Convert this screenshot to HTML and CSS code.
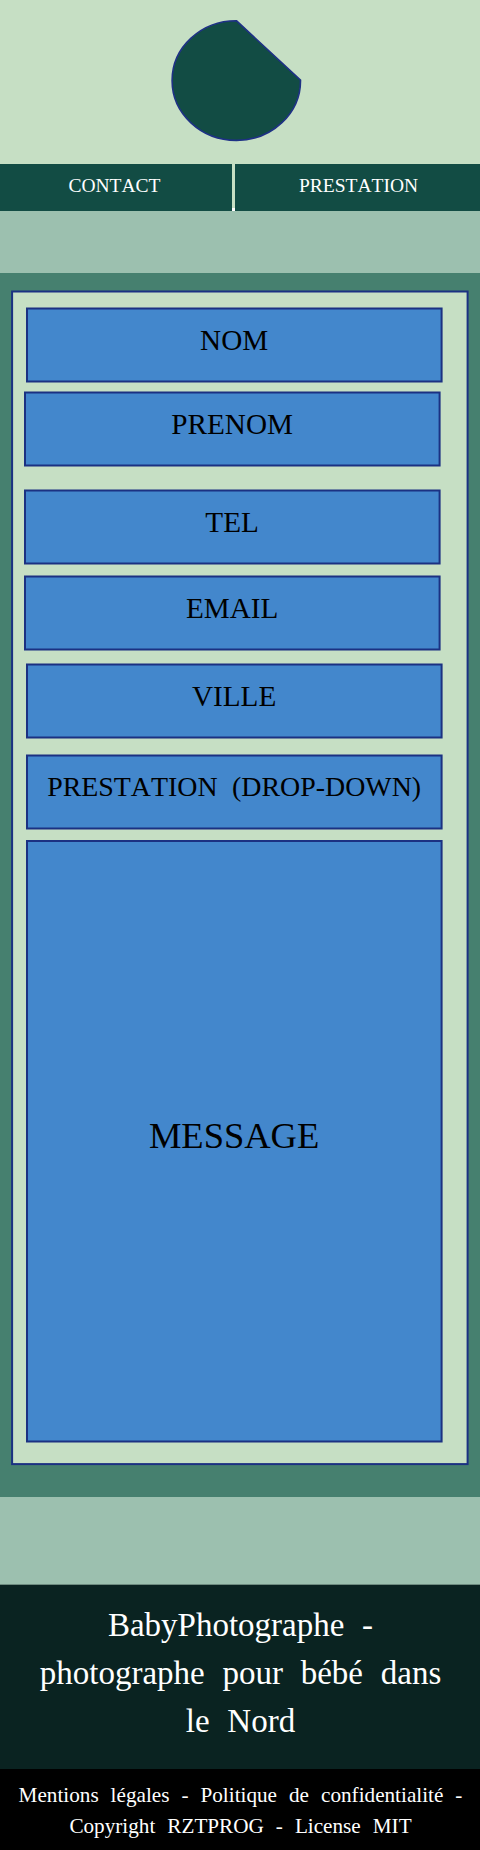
FILE: index.html
```html
<!DOCTYPE html>
<html lang="fr">
<head>
<meta charset="utf-8">
<title>BabyPhotographe - Contact</title>
<link rel="stylesheet" href="styles.css">
</head>
<body>
<header class="header">
  <svg class="logo" width="131" height="124" viewBox="0 0 131 124" role="img" aria-label="Logo">
    <path d="M129.5 61.2A64.2 59.8 0 1 1 65.6 1.8Z"/>
  </svg>
</header>
<nav class="nav">
  <a class="nav-link">CONTACT</a>
  <span class="nav-divider"></span>
  <a class="nav-link nav-link-wide">PRESTATION</a>
</nav>
<main class="main">
  <div class="card">
    <svg class="frame card-frame" width="459" height="1176"><rect x="1.1" y="1.5" width="455.5" height="1172.6"/></svg>
    <form class="form">
      <div class="field"><svg class="frame" width="417" height="76"><rect x="1" y="1.5" width="414.6" height="73"/></svg><span class="label">NOM</span></div>
      <div class="field shifted prenom"><svg class="frame" width="417" height="76"><rect x="1" y="1.5" width="414.6" height="73"/></svg><span class="label">PRENOM</span></div>
      <div class="field shifted tel"><svg class="frame" width="417" height="76"><rect x="1" y="1.5" width="414.6" height="73"/></svg><span class="label">TEL</span></div>
      <div class="field shifted email"><svg class="frame" width="417" height="76"><rect x="1" y="1.5" width="414.6" height="73"/></svg><span class="label">EMAIL</span></div>
      <div class="field ville"><svg class="frame" width="417" height="76"><rect x="1" y="1.5" width="414.6" height="73"/></svg><span class="label">VILLE</span></div>
      <div class="field prestation"><svg class="frame" width="417" height="76"><rect x="1" y="1.5" width="414.6" height="73"/></svg><span class="label">PRESTATION (DROP-DOWN)</span></div>
      <div class="field message"><svg class="frame" width="417" height="603"><rect x="1" y="1" width="414.6" height="600.5"/></svg><span class="label">MESSAGE</span></div>
    </form>
  </div>
</main>
<footer class="footer">
  <p class="tagline">BabyPhotographe -<br>photographe pour bébé dans<br>le Nord</p>
  <p class="legal">Mentions légales - Politique de confidentialité -<br>Copyright RZTPROG - License MIT</p>
</footer>
</body>
</html>
```
FILE: styles.css
```css
* { box-sizing: border-box; }
body {
  margin: 0;
  width: 480px;
  background: #9cc0af;
  font-family: "Liberation Serif", "Times New Roman", serif;
  font-kerning: none;
}
.header {
  height: 164px;
  padding: 19px 0 0 171px;
  background: #c6dfc4;
}
.logo { display: block; }
.logo path { fill: #124c44; stroke: #1e3185; stroke-width: 1.6; }
.nav {
  display: flex;
  height: 47px;
  margin-bottom: 62px;
  background: #124c44;
}
.nav-link {
  width: 232px;
  padding-left: 68.4px;
  color: #fff;
  font-size: 19.5px;
  line-height: 44px;
}
.nav-link-wide { flex: 1; padding-left: 64px; }
.nav-divider {
  width: 3px;
  background: #c6dfc4;
  border-bottom: 3px solid #fff;
}
.main {
  height: 1224px;
  padding: 17px 0 0 11px;
  background: #46806f;
}
.card { display: grid; width: 459px; height: 1176px; }
.card > * { grid-area: 1 / 1; }
.frame { display: block; }
.frame rect { fill: #4387cc; stroke: #1b3182; stroke-width: 2; }
.card-frame rect { fill: #c6dfc4; }
.form { padding: 17px 0 0 15px; }
.field { display: grid; width: 417px; height: 76px; }
.field > * { grid-area: 1 / 1; }
.shifted { margin-left: -2px; }
.prenom { margin-top: 8px; }
.tel { margin-top: 22px; }
.email { margin-top: 10px; }
.ville { margin-top: 12px; }
.prestation { margin-top: 15px; }
.message { margin-top: 10px; height: 603px; }
.label {
  padding-right: 0.8px;
  color: #000;
  font-size: 29.2px;
  line-height: 66px;
  text-align: center;
}
.prestation .label {
  font-size: 27.9px;
  word-spacing: 7.5px;
}
.message .label { font-size: 36.5px; line-height: 591px; }
.footer { margin-top: 87px; color: #fff; text-align: center; }
.footer p { margin: 0; }
.tagline {
  height: 185px;
  padding: 16px 0 0 1px;
  background: #0a2321;
  border-top: 1px solid #6d8a7f;
  font-size: 33px;
  line-height: 48px;
  word-spacing: 9.5px;
}
.legal {
  height: 81px;
  padding: 11px 0 0 1px;
  background: #000;
  font-size: 21.2px;
  line-height: 31px;
  word-spacing: 6.7px;
}
```
